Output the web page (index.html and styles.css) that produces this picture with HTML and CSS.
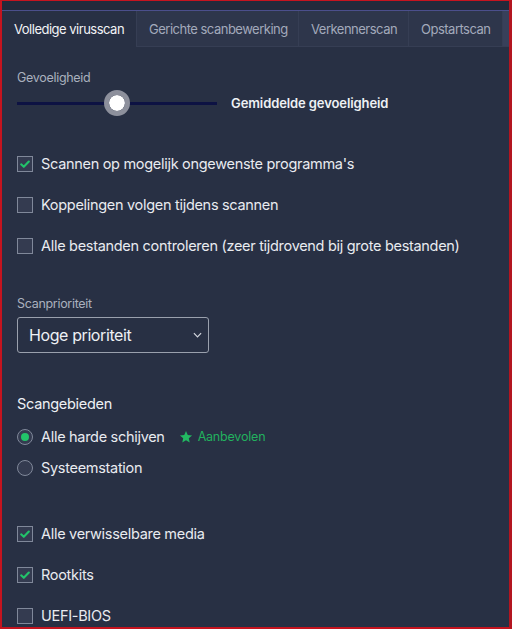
FILE: index.html
```html
<!DOCTYPE html>
<html lang="nl">
<head>
<meta charset="utf-8">
<link rel="stylesheet" href="styles.css">
</head>
<body>
<div class="frame">
  <div class="topband"></div>
  <div class="tabs">
    <div class="tab active">Volledige virusscan</div>
    <div class="tab">Gerichte scanbewerking</div>
    <div class="tab">Verkennerscan</div>
    <div class="tab">Opstartscan</div>
    <div class="tab stub"></div>
  </div>
  <div class="content">
    <div class="label first">Gevoeligheid</div>
    <div class="slider-row">
      <div class="slider">
        <div class="track"></div>
        <div class="thumb"></div>
      </div>
      <div class="slider-value">Gemiddelde gevoeligheid</div>
    </div>

    <div class="checks">
      <div class="row"><span class="box checked"><svg viewBox="0 0 16 16"><path d="M3.6 8.4 L6.6 11.2 L12.4 5.2" /></svg></span>Scannen op mogelijk ongewenste programma's</div>
      <div class="row"><span class="box"></span>Koppelingen volgen tijdens scannen</div>
      <div class="row"><span class="box"></span>Alle bestanden controleren (zeer tijdrovend bij grote bestanden)</div>
    </div>

    <div class="label prio">Scanprioriteit</div>
    <div class="select">
      <span>Hoge prioriteit</span>
      <svg class="chev" viewBox="0 0 10 6"><path d="M1 1 L5 5 L9 1"/></svg>
    </div>

    <div class="heading">Scangebieden</div>
    <div class="radios">
      <div class="row"><span class="radio on"></span>Alle harde schijven
        <span class="rec"><svg viewBox="0 0 24 24"><path d="M12 1.8 L15 8.6 L22.4 9.3 L16.8 14.2 L18.4 21.5 L12 17.7 L5.6 21.5 L7.2 14.2 L1.6 9.3 L9 8.6 Z"/></svg>Aanbevolen</span>
      </div>
      <div class="row"><span class="radio"></span>Systeemstation</div>
    </div>

    <div class="checks bottom">
      <div class="row"><span class="box checked"><svg viewBox="0 0 16 16"><path d="M3.6 8.4 L6.6 11.2 L12.4 5.2" /></svg></span>Alle verwisselbare media</div>
      <div class="row"><span class="box checked"><svg viewBox="0 0 16 16"><path d="M3.6 8.4 L6.6 11.2 L12.4 5.2" /></svg></span>Rootkits</div>
      <div class="row"><span class="box"></span>UEFI-BIOS</div>
    </div>
  </div>
</div>
</body>
</html>
```
FILE: styles.css
```css
* { box-sizing: border-box; }
html, body { margin: 0; padding: 0; }
body {
  width: 512px;
  height: 629px;
  overflow: hidden;
  background: #283044;
  font-family: Inter, "Liberation Sans", sans-serif;
  color: #e8eaf0;
}
.frame {
  width: 512px;
  height: 629px;
  border-top: 1px solid #c4141f;
  border-left: 2px solid #c4141f;
  border-right: 3px solid #b31520;
  border-bottom: 2px solid #c4141f;
  background: #283044;
  overflow: hidden;
}
.topband {
  height: 10px;
  background: #222a3b;
  border-bottom: 1px solid #4b4f8c;
}
.tabs {
  display: flex;
  height: 36px;
  background: #2d354a;
}
.tab {
  display: flex;
  align-items: center;
  padding: 0 12px;
  font-size: 13px;
  letter-spacing: -0.5px;
  color: #a3aabb;
  background: #2e364b;
  border-right: 1px solid #363e54;
  border-bottom: 1px solid #363e54;
  white-space: nowrap;
}
.tab.active {
  background: #283044;
  color: #f2f3f6;
  border-bottom: none;
  width: 135px;
}
.tab:nth-child(2) { width: 162px; }
.tab:nth-child(3) { width: 110px; }
.tab:nth-child(4) { width: 94px; }
.tab.stub { flex: 1; padding: 0; background: #38405a; border-right: none; }

.content {
  padding: 0 0 0 15px;
}
.label {
  font-size: 12.5px;
  letter-spacing: -0.3px;
  color: #aab0be;
}
.label.first { margin-top: 23px; line-height: 16px; }
.slider-row {
  display: flex;
  align-items: center;
  height: 26px;
  margin-top: 4px;
}
.slider {
  position: relative;
  width: 200px;
  height: 26px;
}
.track {
  position: absolute;
  left: 0; right: 0;
  top: 12px;
  height: 3px;
  background: #0d1243;
}
.thumb {
  position: absolute;
  left: 87px;
  top: 0;
  width: 26px;
  height: 26px;
  border-radius: 50%;
  background: #ffffff;
  border: 5px solid #8d909c;
  background-clip: padding-box;
}
.slider-value {
  margin-left: 14px;
  font-size: 13px;
  font-weight: 600;
  letter-spacing: -0.1px;
  color: #eef0f4;
}
.checks { margin-top: 27px; display: flex; flex-direction: column; }
.row {
  display: flex;
  align-items: center;
  height: 41px;
  font-size: 14.5px;
  letter-spacing: -0.3px;
  color: #e9ebf0;
  white-space: nowrap;
}
.box {
  width: 16px;
  height: 16px;
  border: 1px solid #80889a;
  background: #343b50;
  margin-right: 8px;
  flex: none;
  display: flex;
}
.box svg { width: 14px; height: 14px; }
.box svg path { fill: none; stroke: #22c36a; stroke-width: 2.4; stroke-linecap: round; stroke-linejoin: round; }

.label.prio { margin-top: 30px; line-height: 16px; }
.select {
  margin-top: 5px;
  width: 192px;
  height: 36px;
  border: 1px solid #9aa0ad;
  border-radius: 3px;
  display: flex;
  align-items: center;
  justify-content: space-between;
  padding: 0 6px 0 11px;
  font-size: 16px;
  letter-spacing: -0.4px;
  color: #eef0f4;
}
.chev { width: 9px; height: 6px; }
.chev path { fill: none; stroke: #d4d7df; stroke-width: 1.3; }

.heading {
  margin-top: 42px;
  font-size: 14.5px;
  letter-spacing: -0.3px;
  color: #eef0f4;
  line-height: 18px;
}
.radios { margin-top: 8px; }
.radios .row { height: 31px; }
.radio {
  width: 16px;
  height: 16px;
  border-radius: 50%;
  border: 1px solid #80889a;
  background: #343b50;
  margin-right: 8px;
  flex: none;
  position: relative;
}
.radio.on::after {
  content: "";
  position: absolute;
  left: 3px; top: 3px;
  width: 8px; height: 8px;
  border-radius: 50%;
  background: #22c36a;
}
.rec {
  display: inline-flex;
  align-items: center;
  margin-left: 14px;
  font-size: 12.5px;
  letter-spacing: -0.2px;
  color: #22b05e;
}
.rec svg { width: 14px; height: 14px; margin-right: 5px; }
.rec svg path { fill: #22b862; }
.checks.bottom { margin-top: 30px; }
```
